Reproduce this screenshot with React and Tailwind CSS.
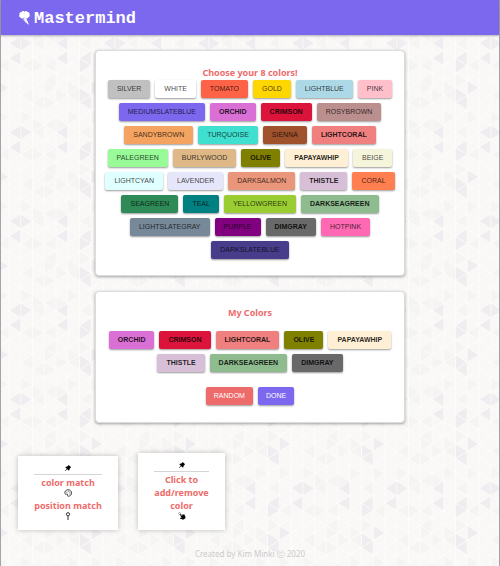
import React, { useState } from "react";
import { GiClick } from "react-icons/gi";
import { AiFillPushpin } from "react-icons/ai";

const COLORS = [
  ["silver", "bg-[#c0c0c0]"],
  ["white", "bg-[#ffffff]"],
  ["tomato", "bg-[#ff6347]"],
  ["gold", "bg-[#ffd700]"],
  ["lightblue", "bg-[#add8e6]"],
  ["pink", "bg-[#ffc0cb]"],
  ["mediumslateblue", "bg-[#7b68ee]"],
  ["orchid", "bg-[#da70d6]"],
  ["crimson", "bg-[#dc143c]"],
  ["rosybrown", "bg-[#bc8f8f]"],
  ["sandybrown", "bg-[#f4a460]"],
  ["turquoise", "bg-[#40e0d0]"],
  ["sienna", "bg-[#a0522d]"],
  ["lightcoral", "bg-[#f08080]"],
  ["palegreen", "bg-[#98fb98]"],
  ["burlywood", "bg-[#deb887]"],
  ["olive", "bg-[#808000]"],
  ["papayawhip", "bg-[#ffefd5]"],
  ["beige", "bg-[#f5f5dc]"],
  ["lightcyan", "bg-[#e0ffff]"],
  ["lavender", "bg-[#e6e6fa]"],
  ["darksalmon", "bg-[#e9967a]"],
  ["thistle", "bg-[#d8bfd8]"],
  ["coral", "bg-[#ff7f50]"],
  ["seagreen", "bg-[#2e8b57]"],
  ["teal", "bg-[#008080]"],
  ["yellowgreen", "bg-[#9acd32]"],
  ["darkseagreen", "bg-[#8fbc8f]"],
  ["lightslategray", "bg-[#778899]"],
  ["purple", "bg-[#800080]"],
  ["dimgray", "bg-[#696969]"],
  ["hotpink", "bg-[#ff69b4]"],
  ["darkslateblue", "bg-[#483d8b]"],
];

const INITIAL = ["orchid", "crimson", "lightcoral", "olive", "papayawhip", "thistle", "darkseagreen", "dimgray"];

/* Triangle wallpaper: 8 columns by 6 rows per tile. */
const TILE_W = 94;
const TILE_H = 89;
const COL = TILE_W / 8;
const SIDE = TILE_H / 6;

// [column, apex row, direction]
const DARK = [
  [0, 4, "l"], [0, 5, "l"], [2, 1.5, "r"], [2, 2, "l"], [3, 1, "r"],
  [4, 4, "l"], [5, 4, "r"], [4, 5, "l"], [2, 5, "l"], [2, 5.5, "r"],
];
const LIGHT = [
  [6, 2, "l"], [7, 2, "r"], [7, 3.5, "l"], [7, 5.5, "l"], [0, 3.5, "r"], [1, 1, "r"],
  [1, 1.5, "l"], [0, 1.5, "r"], [2, 4, "l"], [3, 3, "r"], [6, 4, "l"], [5, 5.5, "l"],
  [6, 3.5, "r"], [6, 5.5, "r"], [3, 5.5, "l"], [7, 0.5, "l"], [5, 1.5, "l"],
  [7, 1, "r"], [1, 3, "r"], [5, 3, "r"], [2, 0.5, "r"],
];

function points([c, k, dir]) {
  const left = c * COL;
  const right = left + COL;
  const y = k * SIDE;
  return dir === "l"
    ? `${left},${y} ${right},${y - SIDE / 2} ${right},${y + SIDE / 2}`
    : `${right},${y} ${left},${y - SIDE / 2} ${left},${y + SIDE / 2}`;
}

function gridPath() {
  let d = "";
  for (let i = 0; i <= 8; i++) d += `M${i * COL} 0V${TILE_H}`;
  for (let k = -4; k <= 10; k++) {
    d += `M0 ${k * SIDE}L${TILE_W} ${(k + 4) * SIDE}M0 ${k * SIDE}L${TILE_W} ${(k - 4) * SIDE}`;
  }
  return d;
}

function Wallpaper() {
  return (
    <svg className="absolute inset-0 -z-10 h-full w-full" aria-hidden="true">
      <defs>
        <pattern id="triangles" x="55" y="73" width={TILE_W} height={TILE_H} patternUnits="userSpaceOnUse">
          <rect width={TILE_W} height={TILE_H} fill="#f9f8f7" />
          {LIGHT.map((t) => <polygon key={t.join()} points={points(t)} fill="#f5f4f3" />)}
          {DARK.map((t) => <polygon key={t.join()} points={points(t)} fill="#efedef" />)}
          <path d={gridPath()} stroke="#fcfcfb" strokeWidth="0.8" fill="none" />
        </pattern>
      </defs>
      <rect width="100%" height="100%" fill="url(#triangles)" />
    </svg>
  );
}

function Chip({ className, children, ...rest }) {
  return (
    <button
      type="button"
      className={`h-[18px] rounded-[2px] font-['Liberation_Sans',Arial,sans-serif] text-[7px] leading-[18px] uppercase shadow-[0_1px_2px_rgba(0,0,0,0.4)] ${className}`}
      {...rest}
    >
      {children}
    </button>
  );
}

function Card({ className, children }) {
  return (
    <section className={`mx-auto w-full max-w-[310px] rounded-[4px] border border-[#dcdcdc] bg-white px-2 shadow-[0_1px_3px_rgba(0,0,0,0.35)] ${className}`}>
      {children}
    </section>
  );
}

function BrainLogo() {
  return (
    <svg viewBox="0 0 16 16" className="h-4 w-4" fill="currentColor" aria-hidden="true">
      <path d="M6.3 1.2C5 .6 3.9 1 3.5 2 2 2 1.100 3.300 1.600 4.500.7 5.500 1.100 7.200 2.500 7.500 3 8.800 4.600 9 5.500 8.300L6.500 7.500 7.600 8.600C8.600 9 9.700 8.500 10 7.600 11.500 7.300 12.200 5.800 11.500 4.600 12 3.200 11 2 9.600 2.100 9 1 7.700.7 6.900 1.500L6.600 2.800Z" />
      <path d="M5 9.200 8.500 9.300 9.400 10.500 6 10.700ZM6.500 11.300 9.600 11.100 10.200 12.300 7.800 12.700ZM8.500 13.100 10.200 12.900 11 15Z" />
      <path d="M5.800 8 7.300 7.800 10.300 13.500 9.500 13.800Z" />
    </svg>
  );
}

function PaletteIcon() {
  return (
    <svg viewBox="0 0 16 16" className="h-2 w-2" fill="none" stroke="#333" aria-hidden="true">
      <path d="M2 9.500C.5 5 4 1.500 8.500 1.500 12.500 1.500 15 4.500 15 8 15 12 12 14.500 8.500 14.500 6 14.500 7.500 12 7 10.500 6.300 8.800 3 12 2 9.500Z" strokeWidth="1.8" />
      <path d="M5 6.500h1.500M8 4.500h1.500M11 6.500h1.500M11 10h1.500" strokeWidth="1.800" />
    </svg>
  );
}

function PinIcon() {
  return (
    <svg viewBox="0 0 16 16" className="h-2 w-2" fill="none" stroke="#333" strokeWidth="2" aria-hidden="true">
      <circle cx="8" cy="4.5" r="3.2" />
      <path d="M8 8v8" />
    </svg>
  );
}

function Note({ className, children }) {
  return (
    <aside className={`flex flex-col items-center bg-white px-4 text-center text-[9px] leading-[13px] font-bold text-[#ee6b6b] shadow-[0_0_5px_rgba(0,0,0,0.25)] ${className}`}>
      <AiFillPushpin className="h-2 w-2 text-black" aria-hidden="true" />
      <hr className="mt-[2px] mb-[1px] w-full border-[#d5d5d5]" />
      {children}
    </aside>
  );
}

export default function App() {
  const [mine, setMine] = useState(INITIAL);
  const toggle = (name) =>
    setMine((m) => (m.includes(name) ? m.filter((n) => n !== name) : m.length < 8 ? [...m, name] : m));
  const randomize = () =>
    setMine([...COLORS].sort(() => Math.random() - 0.5).slice(0, 8).map(([name]) => name));

  return (
    <div className="relative isolate flex min-h-screen flex-col border-x border-[#a3a3a8] font-['Noto_Sans','Open_Sans',sans-serif]">
      <Wallpaper />
      <header className="flex h-[35px] items-center bg-[#7b68ee] px-[17px] text-white shadow-[0_1px_2px_rgba(0,0,0,0.3)]">
        <BrainLogo />
        <h1 className="pt-[3px] font-['Liberation_Mono','Courier_New',monospace] text-[17px] leading-5 font-bold">Mastermind</h1>
      </header>

      <main>
        <Card className="mt-[15px] pt-[14px] pb-4">
          <h2 className="text-center text-[9px] leading-[15px] font-bold text-[#ee6b6b]">Choose your 8 colors!</h2>
          <div className="flex flex-wrap justify-center gap-[5px]">
            {COLORS.map(([name, bg]) => (
              <Chip
                key={name}
                aria-pressed={mine.includes(name)}
                onClick={() => toggle(name)}
                className={`${bg} px-[9px] ${mine.includes(name) ? "font-bold text-black/85" : "text-black/75"}`}
              >
                {name}
              </Chip>
            ))}
          </div>
        </Card>

        <Card className="mt-[15px] pt-[13px] pb-[17px]">
          <h2 className="text-center text-[9px] leading-[15px] font-bold text-[#ee6b6b]">My Colors</h2>
          <div className="mt-[11px] flex flex-wrap justify-center gap-[5px]">
            {COLORS.filter(([name]) => mine.includes(name)).map(([name, bg]) => (
              <Chip key={name} onClick={() => toggle(name)} className={`${bg} px-[9px] font-bold text-black/85`}>
                {name}
              </Chip>
            ))}
          </div>
          <div className="mt-[15px] flex justify-center gap-[5px]">
            <Chip onClick={randomize} className="bg-[#ee6b6b] px-2 text-white">Random</Chip>
            <Chip className="bg-[#7b68ee] px-2 text-white">Done</Chip>
          </div>
        </Card>

        <div className="mt-[30px] flex items-end gap-5 px-[17px]">
          <Note className="w-[100px] pt-2 pb-[10px]">
            <p>color match</p>
            <PaletteIcon />
            <p className="mt-[2px] whitespace-nowrap">position match</p>
            <PinIcon />
          </Note>
          <Note className="w-[87px] pt-2 pb-[10px]">
            <p>Click to add/remove color</p>
            <GiClick className="h-2 w-2 text-black" aria-hidden="true" />
          </Note>
        </div>
      </main>

      <footer className="mt-auto pb-[6px] text-center text-[8px] leading-3 text-[#cbcbcb]">
        Created by Kim Minki ⓒ 2020
      </footer>
    </div>
  );
}
